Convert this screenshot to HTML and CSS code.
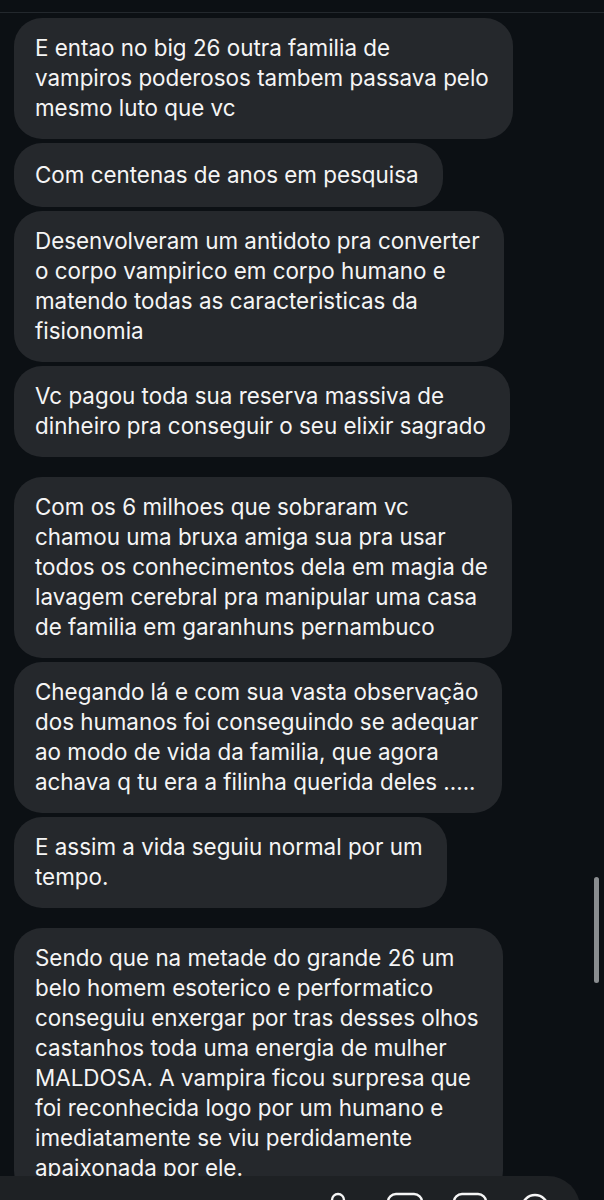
FILE: index.html
```html
<!DOCTYPE html>
<html lang="pt">
<head>
<meta charset="utf-8">
<link rel="stylesheet" href="styles.css">
</head>
<body>
<div class="screen">
  <div class="topbar"></div>
  <div class="thread">
    <div class="group">
      <div class="bubble">E entao no big 26 outra familia de<br>vampiros poderosos tambem passava pelo<br>mesmo luto que vc</div>
      <div class="bubble single">Com centenas de anos em pesquisa</div>
      <div class="bubble">Desenvolveram um antidoto pra converter<br>o corpo vampirico em corpo humano e<br>matendo todas as caracteristicas da<br>fisionomia</div>
      <div class="bubble">Vc pagou toda sua reserva massiva de<br>dinheiro pra conseguir o seu elixir sagrado</div>
    </div>
    <div class="group">
      <div class="bubble">Com os 6 milhoes que sobraram vc<br>chamou uma bruxa amiga sua pra usar<br>todos os conhecimentos dela em magia de<br>lavagem cerebral pra manipular uma casa<br>de familia em garanhuns pernambuco</div>
      <div class="bubble">Chegando lá e com sua vasta observação<br>dos humanos foi conseguindo se adequar<br>ao modo de vida da familia, que agora<br>achava q tu era a filinha querida deles .....</div>
      <div class="bubble">E assim a vida seguiu normal por um<br>tempo.</div>
    </div>
    <div class="group">
      <div class="bubble">Sendo que na metade do grande 26 um<br>belo homem esoterico e performatico<br>conseguiu enxergar por tras desses olhos<br>castanhos toda uma energia de mulher<br>MALDOSA. A vampira ficou surpresa que<br>foi reconhecida logo por um humano e<br>imediatamente se viu perdidamente<br>apaixonada por ele.</div>
    </div>
  </div>
  <div class="scrollbar"></div>
  <div class="composer">
    <svg class="ico mic" viewBox="0 0 20 30" width="20" height="30"><rect x="4" y="2" width="12" height="18" rx="6" fill="none" stroke="#f5f5f5" stroke-width="2.4"/></svg>
    <svg class="ico photo" viewBox="0 0 38 30" width="38" height="30"><rect x="2" y="2" width="34" height="28" rx="8" fill="none" stroke="#f5f5f5" stroke-width="2.4"/></svg>
    <svg class="ico sticker" viewBox="0 0 36 30" width="36" height="30"><rect x="2" y="2" width="32" height="28" rx="8" fill="none" stroke="#f5f5f5" stroke-width="2.4"/></svg>
    <svg class="ico plus" viewBox="0 0 30 30" width="30" height="30"><circle cx="15" cy="16" r="13" fill="none" stroke="#f5f5f5" stroke-width="2.4"/></svg>
  </div>
</div>
</body>
</html>
```

FILE: styles.css
```css
html, body {
  margin: 0;
  padding: 0;
  background: #0c1014;
}
body {
  width: 604px;
  height: 1200px;
  overflow: hidden;
  font-family: Inter, "Noto Sans", Roboto, sans-serif;
}
.screen {
  position: relative;
  width: 604px;
  height: 1200px;
  overflow: hidden;
  background: #0c1014;
}
.topbar {
  height: 12px;
  border-bottom: 1px solid #23282d;
}
.thread {
  display: flex;
  flex-direction: column;
  gap: 20px;
  padding: 5px 0 0 14px;
}
.group {
  display: flex;
  flex-direction: column;
  align-items: flex-start;
  gap: 4px;
}
.bubble {
  background: #25282c;
  color: #f5f5f5;
  font-size: 22.4px;
  line-height: 30px;
  padding: 15px 24px 16px 21px;
  border-radius: 28px;
  white-space: nowrap;
}
.bubble.single {
  padding-top: 17px;
  padding-bottom: 17px;
}
.scrollbar {
  position: absolute;
  left: 594px;
  top: 877px;
  width: 5px;
  height: 106px;
  border-radius: 3px;
  background: #8a8d90;
}
.composer {
  position: absolute;
  left: -40px;
  top: 1176px;
  width: 620px;
  height: 70px;
  border-radius: 32px;
  background: #1e2124;
  display: flex;
  align-items: flex-start;
  justify-content: flex-end;
  gap: 0;
  padding-right: 30px;
  box-sizing: border-box;
}
.ico {
  display: block;
  margin-top: 16px;
}
.mic { margin-right: 38px; }
.photo { margin-right: 28px; }
.sticker { margin-right: 32px; }
```
